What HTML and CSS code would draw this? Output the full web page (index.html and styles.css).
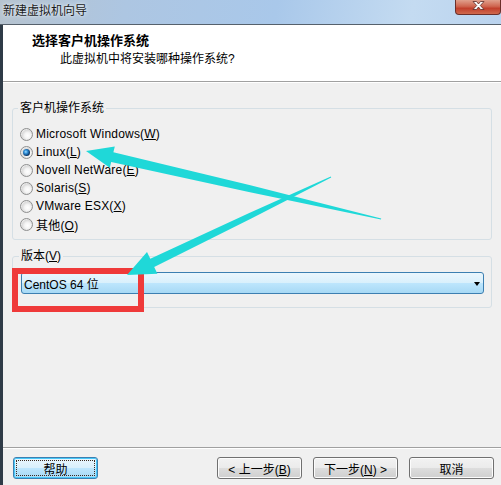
FILE: index.html
```html
<!DOCTYPE html>
<html>
<head>
<meta charset="utf-8">
<link rel="stylesheet" href="styles.css">
</head>
<body>
<div class="window">
  <div class="titlebar">
    <span class="title">新建虚拟机向导</span>
    <span class="close"><svg width="13" height="9" viewBox="0 0 13 9"><path d="M1 0.5 L4.5 0.5 L6.5 3 L8.5 0.5 L12 0.5 L8.3 4.5 L12 8.5 L8.5 8.5 L6.5 6 L4.5 8.5 L1 8.5 L4.7 4.5 Z" fill="#fff" stroke="#5a2a26" stroke-width="0.8"/></svg></span>
  </div>
  <div class="client">
    <div class="header">
      <div class="h-title">选择客户机操作系统</div>
      <div class="h-sub">此虚拟机中将安装哪种操作系统?</div>
    </div>
    <div class="body">
      <fieldset class="group os">
        <legend>客户机操作系统</legend>
        <div class="radio"><span class="dot"></span><span class="lbl">Microsoft Windows(<u>W</u>)</span></div>
        <div class="radio checked"><span class="dot"></span><span class="lbl">Linux(<u>L</u>)</span></div>
        <div class="radio"><span class="dot"></span><span class="lbl">Novell NetWare(<u>E</u>)</span></div>
        <div class="radio"><span class="dot"></span><span class="lbl">Solaris(<u>S</u>)</span></div>
        <div class="radio"><span class="dot"></span><span class="lbl">VMware ESX(<u>X</u>)</span></div>
        <div class="radio"><span class="dot"></span><span class="lbl">其他(<u>O</u>)</span></div>
      </fieldset>
      <fieldset class="group ver">
        <legend>版本(<u>V</u>)</legend>
        <div class="select"><span class="sel-text">CentOS 64 位</span><span class="sel-arrow"></span></div>
      </fieldset>
    </div>
    <div class="footer">
      <button class="btn focus"><span class="focus-ring">帮助</span></button>
      <div class="spacer"></div>
      <div class="btn-group">
        <button class="btn"><span>&lt; 上一步(<u>B</u>)</span></button>
        <button class="btn"><span>下一步(<u>N</u>) &gt;</span></button>
        <button class="btn"><span>取消</span></button>
      </div>
    </div>
  </div>
  <div class="redbox"></div>
  <svg class="arrows" width="501" height="485" viewBox="0 0 501 485">
    <polygon fill="#1fd8d8" points="86,151 114.8,146.4 113.4,152.2 250.4,185.3 381.2,218.5 381.0,219.5 248.8,192.1 111.2,162.0 109.8,167.8"/>
    <polygon fill="#1fd8d8" points="127,275 147.0,252.1 150.3,258.8 248.7,213.2 330.8,176.55 331.2,177.45 251.3,218.6 154.2,267.0 157.4,273.7"/>
  </svg>
</div>
</body>
</html>
```

FILE: styles.css
```css
* { box-sizing: border-box; }
html, body { margin: 0; padding: 0; }
body {
  width: 501px;
  height: 485px;
  overflow: hidden;
  font-family: "Liberation Sans", "Noto Sans CJK SC", sans-serif;
  font-size: 12px;
  color: #000;
  background: #f0f0f0;
}
.window {
  position: relative;
  width: 501px;
  height: 485px;
  display: flex;
  flex-direction: column;
}
.titlebar {
  height: 25px;
  flex: none;
  display: flex;
  align-items: flex-start;
  background: linear-gradient(100deg, #b6c3cf 0%, #adc6e2 25%, #a9c8ea 55%, #c4dbf1 82%, #bad3ee 100%);
  border-bottom: 1px solid #56616c;
}
.title {
  padding: 3px 0 0 3px;
  line-height: 16px;
  color: #1a1a1a;
  text-shadow: 0 0 5px #e8f0f8, 0 0 2px #e8f0f8;
}
.close {
  margin-left: auto;
  width: 46px;
  height: 15px;
  border: 1px solid #6b2f2a;
  border-top: none;
  border-radius: 0 0 4px 4px;
  background: linear-gradient(#e0a08c 0%, #cf6650 45%, #c1402c 60%, #cf6a4e 100%);
  display: flex;
  justify-content: center;
  align-items: flex-start;
  padding-top: 1px;
}
.client {
  flex: 1;
  display: flex;
  flex-direction: column;
  border-left: 3px solid #2f3b47;
}
.header {
  height: 57px;
  flex: none;
  background: #fff;
  border-bottom: 1px solid #a0a0a0;
  box-shadow: 0 1px 0 #fff;
  padding: 8px 0 0 29px;
}
.h-title {
  font-size: 13px;
  font-weight: bold;
  line-height: 16px;
}
.h-sub {
  margin: 2px 0 0 28px;
  line-height: 16px;
}
.body {
  flex: 1;
  padding: 18px 0 0 9px;
}
.group {
  margin: 0;
  width: 480px;
  border: 1px solid #d5dfe5;
  border-radius: 3px;
  min-width: 0;
}
.group legend {
  padding: 0 2px;
  margin-left: -2px;
  line-height: 16px;
}
.os {
  padding: 9px 7px 6px 7px;
}
.radio {
  height: 18px;
  display: flex;
  align-items: center;
  gap: 3px;
}
.lbl {
  letter-spacing: 0.2px;
}
.dot {
  position: relative;
  width: 13px;
  height: 13px;
  flex: none;
  border-radius: 50%;
  border: 1px solid #8e8f8f;
  background: radial-gradient(circle at 60% 60%, #ffffff 0, #f4f4f4 3px, #dadada 5.5px, #ececec 6.5px);
}
.checked .dot::after {
  content: "";
  position: absolute;
  left: 2px;
  top: 2px;
  width: 7px;
  height: 7px;
  border-radius: 50%;
  background: radial-gradient(circle at 40% 40%, #a8e0ff 0, #3b9ae0 1.5px, #1a5f9e 3px, #0d3561 4px);
}
.ver {
  margin-top: 8px;
  padding: 8px 7px 13px 8px;
}
.select {
  height: 22px;
  border: 1px solid #3c7fb1;
  border-radius: 3px;
  display: flex;
  align-items: center;
  padding: 0 3px 0 2px;
  background: linear-gradient(#eaf6fd 0%, #d9f0fc 50%, #bee6fd 50%, #a7d9f5 100%);
}
.sel-text {
  flex: 1;
}
.sel-arrow {
  width: 0;
  height: 0;
  border-left: 3.5px solid transparent;
  border-right: 3.5px solid transparent;
  border-top: 4px solid #000;
  margin-top: 1px;
}
.footer {
  height: 38px;
  flex: none;
  display: flex;
  border-top: 1px solid #a0a0a0;
  box-shadow: inset 0 1px 0 #fff;
  padding: 9px 7px 6px 10px;
}
.spacer { flex: 1; }
.btn-group {
  display: flex;
  gap: 11px;
}
.btn {
  width: 85px;
  height: 22px;
  margin: 0;
  padding: 0;
  font-family: inherit;
  font-size: 12px;
  color: #000;
  border: 1px solid #707070;
  border-radius: 3px;
  background: linear-gradient(#f2f2f2 0%, #ebebeb 50%, #dddddd 50%, #cfcfcf 100%);
  box-shadow: inset 0 0 0 1px #fcfcfc;
  display: flex;
  align-items: center;
  justify-content: center;
}
.btn.focus {
  border-color: #3c7fb1;
  background: linear-gradient(#eaf6fd 0%, #d9f0fc 50%, #bee6fd 50%, #a7d9f5 100%);
  box-shadow: inset 0 0 0 1px #48c8f8;
  padding: 2px;
}
.focus-ring {
  width: 100%;
  height: 100%;
  display: flex;
  align-items: center;
  justify-content: center;
  border: 1px dotted #3a2a20;
}
.redbox {
  position: absolute;
  left: 12px;
  top: 268px;
  width: 132px;
  height: 44px;
  border: 6px solid #ef3a3a;
}
.arrows {
  position: absolute;
  left: 0;
  top: 0;
  pointer-events: none;
}
```
